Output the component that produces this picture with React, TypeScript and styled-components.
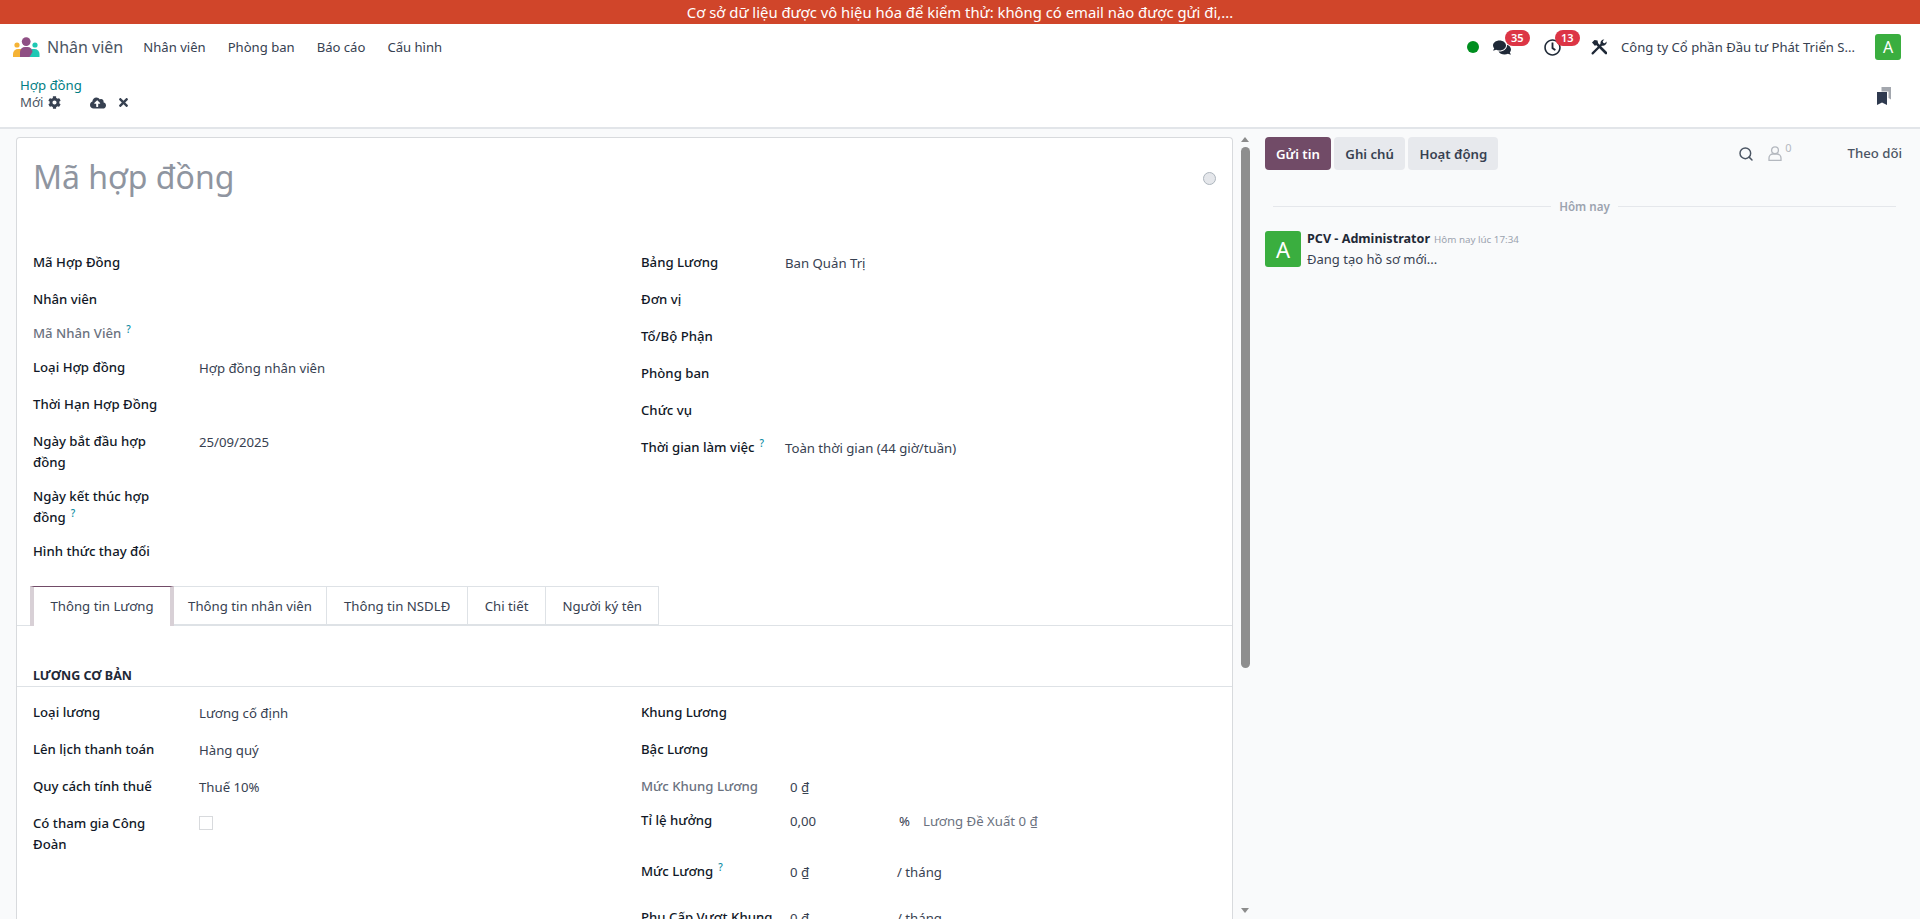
import styled, { createGlobalStyle } from 'styled-components';
import { FaCog, FaCloudUploadAlt, FaTimes, FaComments, FaRegClock } from 'react-icons/fa';
import { Search } from 'lucide-react';

const GlobalStyle = createGlobalStyle`
  html, body, #root {
    margin: 0;
    height: 100%;
  }
  body {
    font-family: "Noto Sans", "Open Sans", sans-serif;
    font-size: 13.2px;
    line-height: 21px;
    color: #374151;
    background: #fff;
    overflow: hidden;
  }
`;

const Page = styled.div`
  display: flex;
  flex-direction: column;
  height: 919px;
  overflow: hidden;
`;
const Banner = styled.div`
  flex: 0 0 24px;
  background: #d0452a;
  color: #fff;
  font-size: 14.85px;
  line-height: 24px;
  text-align: center;
`;
const Navbar = styled.nav`
  flex: 0 0 46px;
  display: flex;
  align-items: center;
  padding: 0 19px 0 13px;
  background: #fff;
  font-size: 13.1px;
`;
const AppBrand = styled.div`
  display: flex;
  align-items: center;
  gap: 7px;
  margin-right: 20px;
  font-size: 16px;
  color: #4b5563;
`;
const NavItem = styled.a`
  margin-right: 22px;
  color: #374151;
`;
const NavRight = styled.div`
  margin-left: auto;
  display: flex;
  align-items: center;
`;
const StatusDot = styled.span`
  width: 12px;
  height: 12px;
  border-radius: 50%;
  background: #008f1f;
  margin-right: 14px;
`;
const SysIcon = styled.span<{ $mr: number; $size: number }>`
  position: relative;
  display: flex;
  width: 18px;
  height: 18px;
  align-items: center;
  justify-content: center;
  margin-right: ${p => p.$mr}px;
  color: #1f2937;
  font-size: ${p => p.$size}px;
`;
const Badge = styled.span`
  position: absolute;
  top: -8px;
  left: 12px;
  padding: 0 6px;
  border-radius: 8px;
  background: #dc3545;
  color: #fff;
  font-size: 11px;
  font-weight: 600;
  line-height: 16px;
`;
const Company = styled.span`
  margin-right: 20px;
`;
const Avatar = styled.span<{ $size: number }>`
  flex: none;
  display: flex;
  align-items: center;
  justify-content: center;
  width: ${p => p.$size}px;
  height: ${p => p.$size}px;
  border-radius: 3px;
  background: #3aae3f;
  color: #fff;
  font-size: ${p => Math.round(p.$size * 0.62)}px;
`;
const ControlPanel = styled.div`
  flex: 0 0 59px;
  display: flex;
  justify-content: space-between;
  padding: 7px 29px 0 20px;
  background: #fff;
  border-bottom: 2px solid #e2e5e9;
  box-sizing: border-box;
`;
const Crumb = styled.a`
  display: block;
  color: #017e84;
  line-height: 17px;
`;
const CrumbRow = styled.div`
  display: flex;
  align-items: center;
  line-height: 17px;
  color: #4b5563;
`;
const ActionIcon = styled.span<{ $ml: number; $size: number }>`
  display: inline-flex;
  margin-left: ${p => p.$ml}px;
  font-size: ${p => p.$size}px;
  color: #374151;
`;
const Bookmarks = styled.svg`
  margin-top: 10px;
`;

const Content = styled.div`
  flex: 1;
  display: flex;
  min-height: 0;
  background: #f9fafb;
`;
const FormArea = styled.div`
  width: 1233px;
  padding: 8px 0 0 16px;
  box-sizing: border-box;
  overflow: hidden;
`;
const Sheet = styled.div`
  width: 100%;
  min-height: 900px;
  box-sizing: border-box;
  background: #fff;
  border: 1px solid #d8dadd;
  border-bottom: 0;
  border-radius: 4px 4px 0 0;
`;
const TitleRow = styled.div`
  display: flex;
  justify-content: space-between;
  align-items: center;
  height: 113px;
  padding: 0 16px 35px 16px;
  box-sizing: border-box;
`;
const Title = styled.h1`
  margin: 0;
  font-size: 32px;
  font-weight: 400;
  line-height: 46px;
  color: #8f95a0;
`;
const Priority = styled.span`
  width: 11px;
  height: 11px;
  margin-top: 2px;
  border-radius: 50%;
  background: #e5e7eb;
  border: 1px solid #adb5bd;
`;
const Group = styled.div`
  display: grid;
  grid-template-columns: 608px 1fr;
  padding-left: 16px;
`;
const Row = styled.div<{ $h: number; $label: number }>`
  display: grid;
  grid-template-columns: ${p => p.$label}px 1fr;
  height: ${p => p.$h}px;
`;
const Label = styled.div<{ $muted?: boolean }>`
  width: 140px;
  padding-top: 1px;
  line-height: 21px;
  font-weight: 500;
  white-space: ${p => (p.$muted ? 'nowrap' : 'normal')};
  color: ${p => (p.$muted ? '#6b7280' : '#111827')};
`;
const WideLabel = styled(Label)`
  width: auto;
  white-space: nowrap;
`;
const Help = styled.sup`
  margin-left: 5px;
  font-size: 10px;
  line-height: 0;
  color: #0c8ca3;
`;
const Value = styled.div`
  padding-top: 1px;
  display: flex;
  line-height: 22px;
`;
const Unit = styled.span<{ $w: number }>`
  width: ${p => p.$w}px;
`;
const Hint = styled.span`
  margin-left: 13px;
  color: #6b7280;
`;
const Checkbox = styled.span`
  width: 12px;
  height: 12px;
  margin-top: 3px;
  border: 1px solid #d8dadd;
`;
const Tabs = styled.div`
  display: flex;
  margin-top: 9px;
  height: 40px;
  box-sizing: border-box;
  padding-left: 13px;
  border-bottom: 1px solid #dee2e6;
`;
const Tab = styled.div<{ $active?: boolean; $px: number }>`
  height: 39px;
  box-sizing: border-box;
  padding: 0 ${p => p.$px}px;
  line-height: 38px;
  background: #fff;
  border: 1px solid #dee2e6;
  border-left-width: 0;
  ${p =>
    p.$active &&
    `
    margin-bottom: -1px;
    height: 40px;
    border-left: 4px solid #d8d0d6;
    border-right: 4px solid #d8d0d6;
    border-top: 1px solid #714b67;
    border-bottom: 0;
  `}
`;
const SectionTitle = styled.div`
  margin-top: 40px;
  height: 20px;
  padding-left: 16px;
  border-bottom: 1px solid #dee2e6;
  font-size: 12.5px;
  font-weight: 700;
  line-height: 20px;
  color: #1f2937;
  text-transform: uppercase;
`;
const SubGroup = styled(Group)`
  margin-top: 14px;
`;
const Column = styled.div``;

const Scrollbar = styled.div`
  flex: 0 0 24px;
  display: flex;
  flex-direction: column;
  align-items: center;
  padding: 8px 0 6px;
  box-sizing: border-box;
`;
const Arrow = styled.span<{ $down?: boolean }>`
  width: 0;
  height: 0;
  border-left: 4.5px solid transparent;
  border-right: 4.5px solid transparent;
  ${p => (p.$down ? 'border-top: 5px solid #8c8c8c;' : 'border-bottom: 5px solid #8c8c8c;')}
  ${p => (p.$down ? 'margin-top: auto;' : '')}
`;
const Thumb = styled.span`
  width: 9px;
  height: 521px;
  margin-top: 5px;
  border-radius: 5px;
  background: #8e8e8e;
`;

const Chatter = styled.aside`
  flex: 1;
  padding: 8px 18px 0 8px;
  min-width: 0;
`;
const ChatterTop = styled.div`
  display: flex;
  align-items: center;
`;
const ChatButton = styled.button<{ $primary?: boolean }>`
  height: 33px;
  margin-right: 3.5px;
  padding: 0 11px;
  border: 0;
  border-radius: 4px;
  font: 600 13.2px "Noto Sans", sans-serif;
  background: ${p => (p.$primary ? '#714b67' : '#e7e9ed')};
  color: ${p => (p.$primary ? '#fff' : '#374151')};
`;
const ChatterTools = styled.div`
  margin-left: auto;
  display: flex;
  align-items: center;
  color: #4b5563;
`;
const FollowerCount = styled.span`
  display: flex;
  align-items: flex-start;
  margin-left: 14px;
  margin-right: 56px;
  color: #b4b8bf;
  font-size: 11px;
  line-height: 12px;
`;
const FollowerZero = styled.span`
  margin: -4px 0 0 3px;
`;
const FollowLink = styled.span`
  font-weight: 500;
  color: #4b5563;
`;
const DateLine = styled.div`
  display: flex;
  align-items: center;
  gap: 8px;
  margin: 26px 6px 0 8px;
  font-size: 11.6px;
  font-weight: 600;
  line-height: 21px;
  color: #9ca3af;

  &::before,
  &::after {
    content: '';
    flex: 1;
    height: 1px;
    background: #e5e7eb;
  }
`;
const Message = styled.div`
  display: flex;
  gap: 6px;
  margin-top: 14px;
`;
const Author = styled.div`
  margin-top: -1px;
  font-weight: 700;
  font-size: 12.6px;
  line-height: 17px;
  color: #1f2937;
`;
const Stamp = styled.span`
  margin-left: 4px;
  font-weight: 400;
  font-size: 9.8px;
  color: #9ca3af;
`;
const Body = styled.div`
  margin-top: 1px;
  line-height: 21px;
  font-size: 13px;
`;

const LogoMark = () => (
  <svg width="27" height="20" viewBox="0 0 27 20">
    <circle cx="4" cy="8" r="2.6" fill="#f5b335" />
    <circle cx="22" cy="8" r="2.6" fill="#1fc8b4" />
    <path d="M0 20v-3a5 5 0 0 1 5-5h3l3 8z" fill="#f5b335" />
    <path d="M26.500 20v-3a5 5 0 0 0-5-5h-3l-2.500 8z" fill="#1fc8b4" />
    <circle cx="13.200" cy="4.600" r="4.400" fill="#8f4f84" />
    <path d="M7 20v-5a5 5 0 0 1 5-5h2.500a5 5 0 0 1 5 5l-3 5z" fill="#8f4f84" />
  </svg>
);

const BookmarkStack = () => (
  <Bookmarks width="14" height="18" viewBox="0 0 14 18">
    <path d="M4.500 0H14v12.500l-2.500-1.500V4.500H4.500z" fill="#a3a7ae" />
    <path d="M0 5h10v13L5 15.500 0 18z" fill="#2f3a4f" />
  </Bookmarks>
);

const UserOutline = () => (
  <svg width="14" height="15" viewBox="0 0 14 15" fill="none" stroke="#b4b8bf" strokeWidth="1.300">
    <circle cx="7" cy="4.200" r="3.400" />
    <path d="M1 14.300v-2.300a4 4 0 0 1 4-4h4a4 4 0 0 1 4 4v2.300z" />
  </svg>
);

const CrossedTools = () => (
  <svg width="16" height="16" viewBox="0 0 16 16">
    <path d="M4.500 3.500 15 14" stroke="#1f2937" strokeWidth="2.600" strokeLinecap="round" />
    <path d="M11.500 4.500 1.600 14.400" stroke="#1f2937" strokeWidth="2.200" strokeLinecap="round" />
    <path d="M1 3.500 3.500 1l3 .5.500 2.500-3 3z" fill="#1f2937" />
    <path d="M15.600 2.600a3.600 3.600 0 0 1-4.700 3.900L9.600 4.900A3.600 3.600 0 0 1 13.300.4l-1.600 1.900.5 1.600 1.600.4z" fill="#1f2937" />
  </svg>
);

const TOP_LEFT = [
  { label: 'Mã Hợp Đồng', h: 37 },
  { label: 'Nhân viên', h: 34 },
  { label: 'Mã Nhân Viên', h: 34, muted: true, help: true },
  { label: 'Loại Hợp đồng', h: 37, value: 'Hợp đồng nhân viên' },
  { label: 'Thời Hạn Hợp Đồng', h: 37 },
  { label: 'Ngày bắt đầu hợp đồng', h: 55, value: '25/09/2025' },
  { label: 'Ngày kết thúc hợp đồng', h: 55, help: true },
  { label: 'Hình thức thay đổi', h: 37 },
];
const TOP_RIGHT = [
  { label: 'Bảng Lương', value: 'Ban Quản Trị' },
  { label: 'Đơn vị' },
  { label: 'Tổ/Bộ Phận' },
  { label: 'Phòng ban' },
  { label: 'Chức vụ' },
  { label: 'Thời gian làm việc', help: true, value: 'Toàn thời gian (44 giờ/tuần)' },
];
const SALARY_LEFT = [
  { label: 'Loại lương', value: 'Lương cố định', h: 37 },
  { label: 'Lên lịch thanh toán', value: 'Hàng quý', h: 37 },
  { label: 'Quy cách tính thuế', value: 'Thuế 10%', h: 37 },
];

const App = () => {
  return (
    <Page>
      <GlobalStyle />
      <Banner>Cơ sở dữ liệu được vô hiệu hóa để kiểm thử: không có email nào được gửi đi,...</Banner>
      <Navbar>
        <AppBrand>
          <LogoMark />
          Nhân viên
        </AppBrand>
        <NavItem>Nhân viên</NavItem>
        <NavItem>Phòng ban</NavItem>
        <NavItem>Báo cáo</NavItem>
        <NavItem>Cấu hình</NavItem>
        <NavRight>
          <StatusDot />
          <SysIcon $mr={32} $size={19}>
            <FaComments />
            <Badge>35</Badge>
          </SysIcon>
          <SysIcon $mr={29} $size={17}>
            <FaRegClock />
            <Badge>13</Badge>
          </SysIcon>
          <SysIcon $mr={13} $size={16}>
            <CrossedTools />
          </SysIcon>
          <Company>Công ty Cổ phần Đầu tư Phát Triển S...</Company>
          <Avatar $size={26}>A</Avatar>
        </NavRight>
      </Navbar>
      <ControlPanel>
        <div>
          <Crumb>Hợp đồng</Crumb>
          <CrumbRow>
            Mới
            <ActionIcon $ml={4} $size={13}>
              <FaCog />
            </ActionIcon>
            <ActionIcon $ml={29} $size={16}>
              <FaCloudUploadAlt />
            </ActionIcon>
            <ActionIcon $ml={11} $size={13}>
              <FaTimes />
            </ActionIcon>
          </CrumbRow>
        </div>
        <BookmarkStack />
      </ControlPanel>
      <Content>
        <FormArea>
          <Sheet>
            <TitleRow>
              <Title>Mã hợp đồng</Title>
              <Priority />
            </TitleRow>
            <Group>
              <Column>
                {TOP_LEFT.map(({ label, h, muted, help, value }) => (
                  <Row key={label} $h={h} $label={166}>
                    <Label $muted={muted}>
                      {label}
                      {help && <Help>?</Help>}
                    </Label>
                    <Value>{value}</Value>
                  </Row>
                ))}
              </Column>
              <Column>
                {TOP_RIGHT.map(({ label, help, value }) => (
                  <Row key={label} $h={37} $label={144}>
                    <WideLabel>
                      {label}
                      {help && <Help>?</Help>}
                    </WideLabel>
                    <Value>{value}</Value>
                  </Row>
                ))}
              </Column>
            </Group>
            <Tabs>
              <Tab $active $px={16.5}>Thông tin Lương</Tab>
              <Tab $px={14}>Thông tin nhân viên</Tab>
              <Tab $px={17}>Thông tin NSDLĐ</Tab>
              <Tab $px={16.5}>Chi tiết</Tab>
              <Tab $px={16.5}>Người ký tên</Tab>
            </Tabs>
            <SectionTitle>Lương cơ bản</SectionTitle>
            <SubGroup>
              <Column>
                {SALARY_LEFT.map(({ label, value, h }) => (
                  <Row key={label} $h={h} $label={166}>
                    <Label>{label}</Label>
                    <Value>{value}</Value>
                  </Row>
                ))}
                <Row $h={55} $label={166}>
                  <Label>Có tham gia Công Đoàn</Label>
                  <Value>
                    <Checkbox />
                  </Value>
                </Row>
              </Column>
              <Column>
                <Row $h={37} $label={149}>
                  <WideLabel>Khung Lương</WideLabel>
                  <Value />
                </Row>
                <Row $h={37} $label={149}>
                  <WideLabel>Bậc Lương</WideLabel>
                  <Value />
                </Row>
                <Row $h={34} $label={149}>
                  <WideLabel $muted>Mức Khung Lương</WideLabel>
                  <Value>0 ₫</Value>
                </Row>
                <Row $h={51} $label={149}>
                  <WideLabel>Tỉ lệ hưởng</WideLabel>
                  <Value>
                    <Unit $w={109}>0,00</Unit>%<Hint>Lương Đề Xuất 0 ₫</Hint>
                  </Value>
                </Row>
                <Row $h={46} $label={149}>
                  <WideLabel>
                    Mức Lương<Help>?</Help>
                  </WideLabel>
                  <Value>
                    <Unit $w={107}>0 ₫</Unit>/ tháng
                  </Value>
                </Row>
                <Row $h={37} $label={149}>
                  <WideLabel>Phụ Cấp Vượt Khung</WideLabel>
                  <Value>
                    <Unit $w={107}>0 ₫</Unit>/ tháng
                  </Value>
                </Row>
              </Column>
            </SubGroup>
          </Sheet>
        </FormArea>
        <Scrollbar>
          <Arrow />
          <Thumb />
          <Arrow $down />
        </Scrollbar>
        <Chatter>
          <ChatterTop>
            <ChatButton $primary>Gửi tin</ChatButton>
            <ChatButton>Ghi chú</ChatButton>
            <ChatButton>Hoạt động</ChatButton>
            <ChatterTools>
              <Search size={16} strokeWidth={2.2} />
              <FollowerCount>
                <UserOutline />
                <FollowerZero>0</FollowerZero>
              </FollowerCount>
              <FollowLink>Theo dõi</FollowLink>
            </ChatterTools>
          </ChatterTop>
          <DateLine>Hôm nay</DateLine>
          <Message>
            <Avatar $size={36}>A</Avatar>
            <div>
              <Author>
                PCV - Administrator<Stamp>Hôm nay lúc 17:34</Stamp>
              </Author>
              <Body>Đang tạo hồ sơ mới...</Body>
            </div>
          </Message>
        </Chatter>
      </Content>
    </Page>
  );
};

export default App;
